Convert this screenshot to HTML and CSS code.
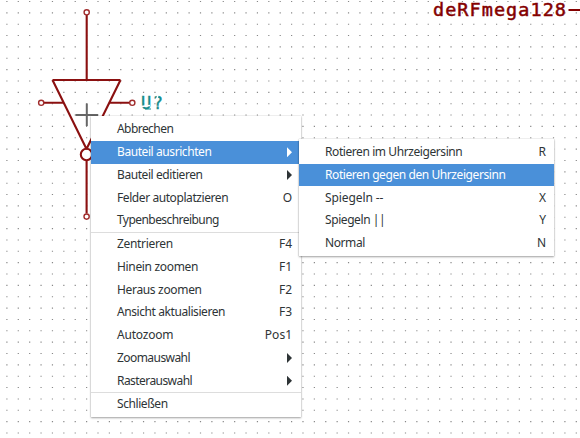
FILE: index.html
```
<!DOCTYPE html>
<html lang="de">
<head>
<meta charset="utf-8">
<title>Schaltplan</title>
<link rel="stylesheet" href="styles.css">
</head>
<body>
<svg class="sheet" width="580" height="438" viewBox="0 0 580 438">
  <g id="grid" class="grid"></g>
  <g class="wire">
    <path d="M86.700 15V80M52.500 80H120.500M52.500 80L86.500 149M120.500 80L86.500 149M44 102.700H63M110 102.700H130M86.600 161V213.500"/>
    <circle cx="86.500" cy="154.500" r="5.700"/>
  </g>
  <g class="pin">
    <circle cx="86.700" cy="12.300" r="2.600"/>
    <circle cx="41.200" cy="102.800" r="2.600"/>
    <circle cx="132.300" cy="102.800" r="2.600"/>
    <circle cx="86.600" cy="216.600" r="2.600"/>
  </g>
  <path class="backing" d="M81 115H98M87 109V125"/>
  <path class="cursor" d="M75.500 115H98M86.800 103.500V126"/>
  <text class="ref" x="141" y="109" textLength="22" lengthAdjust="spacing">U?</text>
  <path class="gap" d="M141 106.500L150 105.500M158 95L156.500 100"/>
  <path class="underline" d="M145 109H151"/>
  <text class="part" x="433" y="15.500" textLength="133" lengthAdjust="spacing">deRFmega128</text>
  <path class="dash" d="M568.500 10H580"/>
</svg>

<nav class="menu main">
  <div class="item t5"><span>Abbrechen</span></div>
  <div class="item t4 active"><span>Bauteil ausrichten</span><i class="arrow"></i></div>
  <div class="item t4"><span>Bauteil editieren</span><i class="arrow"></i></div>
  <div class="item t4"><span>Felder autoplatzieren</span><kbd>O</kbd></div>
  <div class="item t5"><span>Typenbeschreibung</span></div>
  <hr>
  <div class="item t3"><span>Zentrieren</span><kbd>F4</kbd></div>
  <div class="item t3"><span>Hinein zoomen</span><kbd>F1</kbd></div>
  <div class="item t3"><span>Heraus zoomen</span><kbd>F2</kbd></div>
  <div class="item t4"><span>Ansicht aktualisieren</span><kbd>F3</kbd></div>
  <div class="item t2"><span>Autozoom</span><kbd>Pos1</kbd></div>
  <div class="item t5"><span>Zoomauswahl</span><i class="arrow"></i></div>
  <div class="item t5"><span>Rasterauswahl</span><i class="arrow"></i></div>
  <hr>
  <div class="item t4"><span>Schließen</span></div>
</nav>

<nav class="menu sub">
  <div class="item t4"><span>Rotieren im Uhrzeigersinn</span><kbd>R</kbd></div>
  <div class="item t4 active"><span>Rotieren gegen den Uhrzeigersinn</span></div>
  <div class="item t1"><span>Spiegeln --</span><kbd>X</kbd></div>
  <div class="item t4"><span>Spiegeln ||</span><kbd>Y</kbd></div>
  <div class="item t4"><span>Normal</span><kbd>N</kbd></div>
</nav>
<script src="grid.js"></script>
</body>
</html>
```
FILE: styles.css
```
* { box-sizing: border-box; }
body {
  margin: 0;
  width: 580px;
  height: 438px;
  overflow: hidden;
  position: relative;
  background: #fff;
  font-family: "Noto Sans", sans-serif;
  font-size: 12px;
  color: #2e3436;
}
.sheet { display: block; }
.grid { stroke: #888; stroke-width: 1.1; stroke-dasharray: 1.2 10.188; }
.wire { fill: none; stroke: #8b1010; stroke-width: 2.1; }
.pin { fill: #fff; stroke: #a02c2c; stroke-width: 1.4; }
.backing { stroke: #fff; stroke-width: 3; }
.cursor { fill: none; stroke: #666; stroke-width: 2; }
.ref { font: 17px "DejaVu Sans Mono", monospace; fill: #168c8c; stroke: #168c8c; stroke-width: .4; }
.gap { fill: none; stroke: #fff; stroke-width: 1.5; }
.underline { stroke: #168c8c; stroke-width: 1; }
.part { font: 18.5px "DejaVu Sans Mono", monospace; fill: #840000; stroke: #840000; stroke-width: .5; }
.dash { stroke: #840000; stroke-width: 2; }

.menu {
  position: absolute;
  background: #fff;
  display: flex;
  flex-direction: column;
  box-shadow: 0 1px 2px rgba(0, 0, 0, .35), 0 0 1px rgba(0, 0, 0, .25);
}
.main { left: 91px; top: 116px; width: 210px; height: 301px; padding: 2px 2px 0 0; }
.sub { left: 299px; top: 139px; width: 255px; height: 117px; padding-top: 1.8px; }
.item {
  height: 22.75px;
  flex: none;
  display: flex;
  align-items: center;
  justify-content: space-between;
  padding: 0 7px 0 26px;
  line-height: 22px;
  white-space: pre;
}
.sub .item { padding-right: 8px; }
.active { background: #4a90d9; color: #fff; }
.t1 span { letter-spacing: -.1px; }
.t2 span { letter-spacing: -.2px; }
.t3 span { letter-spacing: -.33px; }
.t4 span { letter-spacing: -.42px; }
.t5 span { letter-spacing: -.56px; }
kbd { font: inherit; }
hr { width: 210px; flex: none; height: 1px; margin: 0; border: 0; background: #ddd; }
.arrow {
  width: 5px;
  height: 10px;
  background: currentColor;
  clip-path: polygon(0 0, 100% 50%, 0 100%);
}
```
FILE: grid.js
```
const grid = document.getElementById("grid");
for (let row = 0; row < 39; row++) {
  const line = document.createElementNS("http://www.w3.org/2000/svg", "line");
  const y = 1.5 + row * 11.355;
  line.setAttribute("x1", 6.3);
  line.setAttribute("x2", 580);
  line.setAttribute("y1", y);
  line.setAttribute("y2", y);
  grid.appendChild(line);
}
```
